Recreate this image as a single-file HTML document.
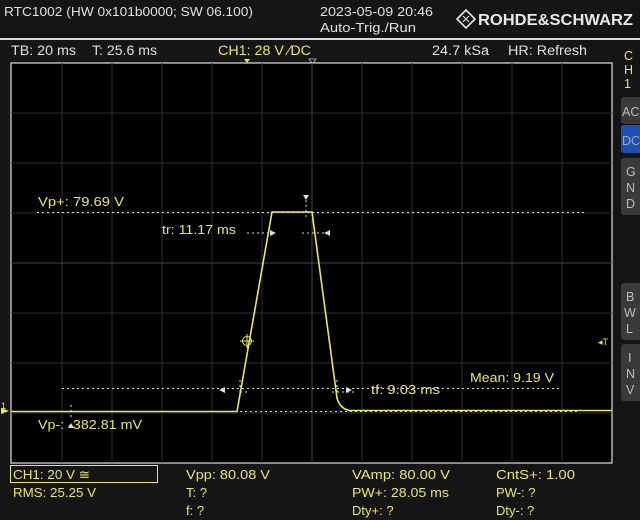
<!DOCTYPE html>
<html><head><meta charset="utf-8"><style>
body{margin:0;width:640px;height:520px;background:#131313;overflow:hidden;font-family:"Liberation Sans",sans-serif}
svg{display:block}
</style></head><body>
<svg width="640" height="520" xmlns="http://www.w3.org/2000/svg" font-family="Liberation Sans, sans-serif">
<rect width="640" height="520" fill="#151515"/>
<rect x="0" y="38" width="640" height="2" fill="#d8d8d8"/>
<g font-size="13" fill="#e0e0e0" lengthAdjust="spacingAndGlyphs">
<text x="4" y="16" textLength="249" lengthAdjust="spacingAndGlyphs">RTC1002 (HW 0x101b0000; SW 06.100)</text>
<text x="320" y="16" textLength="113" lengthAdjust="spacingAndGlyphs">2023-05-09 20:46</text>
<text x="320" y="32" textLength="96" lengthAdjust="spacingAndGlyphs">Auto-Trig./Run</text>
</g>
<g transform="translate(466,19)" fill="none" stroke="#e8e8e8" stroke-width="1.6"><path d="M-9 0 L0 -9 L9 0 L0 9 Z"/><path d="M-3 -3 L3 3 M-3 3 L3 -3" stroke-width="1"/></g>
<text x="478" y="25" font-size="15.5" font-weight="bold" fill="#e8e8e8" textLength="155" lengthAdjust="spacingAndGlyphs">ROHDE&amp;SCHWARZ</text>
<g font-size="13.5" fill="#e0e0e0">
<text x="11" y="55" textLength="65" lengthAdjust="spacingAndGlyphs">TB: 20 ms</text>
<text x="92" y="55" textLength="65" lengthAdjust="spacingAndGlyphs">T: 25.6 ms</text>
<text x="432" y="55" textLength="57" lengthAdjust="spacingAndGlyphs">24.7 kSa</text>
<text x="508" y="55" textLength="79" lengthAdjust="spacingAndGlyphs">HR: Refresh</text>
</g>
<text x="218" y="55" font-size="13.5" fill="#e8e860" textLength="93" lengthAdjust="spacingAndGlyphs">CH1: 28 V ⁄DC</text>
<path d="M244 59 L250 59 L247 63Z" fill="#e8e860"/>
<path d="M309 59 L316 59 L312.5 64Z" fill="none" stroke="#999"/>
<rect x="11" y="63" width="601" height="400" fill="#000" stroke="#e0e0e0" stroke-width="1.2"/>
<g stroke="#2e2e2e" stroke-width="1">
<path d="M62 63V463M112 63V463M162 63V463M212 63V463M262 63V463M362 63V463M412 63V463M462 63V463M512 63V463M562 63V463"/>
<path d="M11 113H612M11 163H612M11 213H612M11 313H612M11 363H612M11 413H612"/>
</g>
<g stroke="#444"><path d="M312 63V463M11 263H612"/></g>
<g stroke="#ddd" stroke-dasharray="2,3" stroke-width="1">
<path d="M37 212.5H586"/><path d="M62 388.5H560"/><path d="M30 411.5H578"/>
<path d="M247 233H277M302 233H330M240 392H250M332 392H356"/>
<path d="M306 200V220M240 380V400M337 380V400M71 405V418"/>
</g>
<path d="M219 390L225 387V393Z M270 230L276 233L270 236Z M330 230L324 233L330 236Z M352 390L346 387V393Z" fill="#ddd"/>
<path d="M303 195H309L306 200Z M68 428H74L71 423Z" fill="#ddd"/>
<path d="M11 411.5H237L272 212H312L337 398Q340 409 350 410.5H612" fill="none" stroke="#e8e860" stroke-width="1.6"/>
<circle cx="247" cy="341" r="4.5" fill="none" stroke="#e8e860"/>
<path d="M240 341H254M247 334V348" stroke="#e8e860"/>
<path d="M1 408L9 411L1 414Z" fill="#e8e860"/>
<text x="1" y="409" font-size="9" fill="#e8e860">1</text>
<text x="598" y="345" font-size="9" fill="#e8e860">◂T</text>
<g font-size="13" fill="#e8e860">
<text x="38" y="206" textLength="86" lengthAdjust="spacingAndGlyphs">Vp+: 79.69 V</text>
<text x="162" y="234" textLength="74" lengthAdjust="spacingAndGlyphs">tr: 11.17 ms</text>
<text x="371" y="394" textLength="69" lengthAdjust="spacingAndGlyphs">tf: 9.03 ms</text>
<text x="470" y="382" textLength="84" lengthAdjust="spacingAndGlyphs">Mean: 9.19 V</text>
<text x="38" y="429" textLength="104" lengthAdjust="spacingAndGlyphs">Vp-: -382.81 mV</text>
</g>
<g font-size="12.5" fill="#e8e860"><text x="624" y="60">C</text><text x="624" y="74">H</text><text x="624" y="88">1</text></g>
<rect x="621" y="97" width="22" height="27" rx="3" fill="#3a3a3a"/>
<rect x="621" y="125" width="22" height="28" rx="3" fill="#1f4fb0"/>
<rect x="621" y="158" width="22" height="57" rx="3" fill="#3a3a3a"/>
<rect x="621" y="283" width="22" height="57" rx="3" fill="#3a3a3a"/>
<rect x="621" y="344" width="22" height="57" rx="3" fill="#3a3a3a"/>
<g font-size="12.5" fill="#bbb">
<text x="622" y="116">AC</text><text x="622" y="145" fill="#9ab">DC</text>
<text x="626" y="176">G</text><text x="626" y="192">N</text><text x="626" y="208">D</text>
<text x="626" y="301">B</text><text x="624" y="317">W</text><text x="626" y="333">L</text>
<text x="628" y="362">I</text><text x="626" y="378">N</text><text x="626" y="394">V</text>
</g>
<rect x="10.5" y="465.5" width="147" height="17" fill="none" stroke="#e8e860"/>
<g font-size="13" fill="#e8e860">
<text x="13" y="479" textLength="77" lengthAdjust="spacingAndGlyphs">CH1: 20 V ≅</text>
<text x="13" y="497" textLength="83" lengthAdjust="spacingAndGlyphs">RMS: 25.25 V</text>
<text x="186" y="479" textLength="84" lengthAdjust="spacingAndGlyphs">Vpp: 80.08 V</text>
<text x="186" y="497">T: ?</text>
<text x="186" y="515">f: ?</text>
<text x="352" y="479" textLength="98" lengthAdjust="spacingAndGlyphs">VAmp: 80.00 V</text>
<text x="352" y="497" textLength="97" lengthAdjust="spacingAndGlyphs">PW+: 28.05 ms</text>
<text x="352" y="515">Dty+: ?</text>
<text x="496" y="479" textLength="79" lengthAdjust="spacingAndGlyphs">CntS+: 1.00</text>
<text x="496" y="497">PW-: ?</text>
<text x="496" y="515">Dty-: ?</text>
</g>
</svg>
</body></html>
